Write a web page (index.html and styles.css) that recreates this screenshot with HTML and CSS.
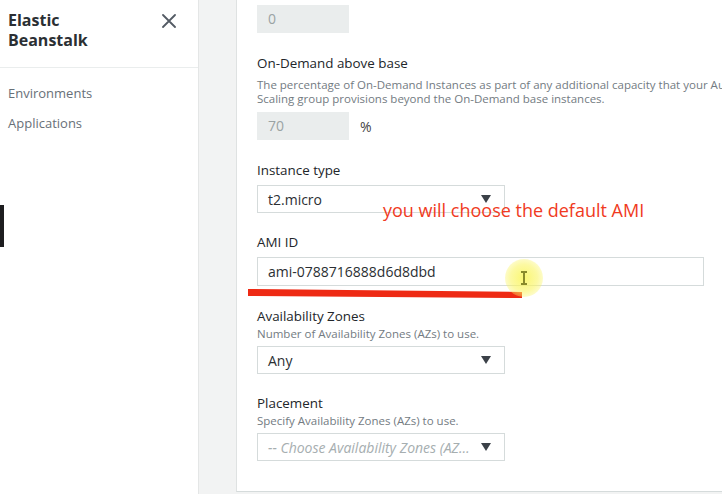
FILE: index.html
```html
<!DOCTYPE html>
<html lang="en">
<head>
<meta charset="utf-8">
<title>Elastic Beanstalk - Capacity</title>
<link rel="stylesheet" href="styles.css">
</head>
<body>
<div class="app">
  <aside class="sidebar">
    <div class="side-head">
      <div class="brand">Elastic<br>Beanstalk</div>
      <svg class="close" width="14" height="14" viewBox="0 0 14 14"><path d="M1 1L13 13M13 1L1 13" stroke="#545b64" stroke-width="1.8" stroke-linecap="round"/></svg>
    </div>
    <nav class="side-nav">
      <a class="nav-item">Environments</a>
      <a class="nav-item">Applications</a>
    </nav>
  </aside>
  <div class="gutter"></div>
  <main class="panel">
    <div class="field first">
      <div class="input small disabled">0</div>
    </div>
    <div class="field">
      <div class="label">On-Demand above base</div>
      <div class="desc spaced">The percentage of On-Demand Instances as part of any additional capacity that your Auto<br>Scaling group provisions beyond the On-Demand base instances.</div>
      <div class="row">
        <div class="input small disabled">70</div>
        <span class="unit">%</span>
      </div>
    </div>
    <div class="field">
      <div class="label">Instance type</div>
      <div class="select"><span class="value">t2.micro</span><span class="caret"></span></div>
    </div>
    <div class="field tight">
      <div class="label">AMI ID</div>
      <div class="input wide">ami-0788716888d6d8dbd</div>
    </div>
    <div class="field">
      <div class="label">Availability Zones</div>
      <div class="desc">Number of Availability Zones (AZs) to use.</div>
      <div class="select"><span class="value">Any</span><span class="caret"></span></div>
    </div>
    <div class="field tight">
      <div class="label">Placement</div>
      <div class="desc">Specify Availability Zones (AZs) to use.</div>
      <div class="select placeholder"><span class="value">-- Choose Availability Zones (AZ…</span><span class="caret"></span></div>
    </div>
  </main>
</div>
<div class="edge-bar"></div>
<div class="note">you will choose the default AMI</div>
<svg class="underline" width="722" height="494" viewBox="0 0 722 494"><polygon points="248,289 522,292 522,298 248,296" fill="#ee2a14"/></svg>
<div class="cursor-glow"><svg width="10" height="14" viewBox="0 0 10 14"><path d="M2 1H8M5 1V13M2 13H8" stroke="#8a8a2a" stroke-width="2"/></svg></div>
</body>
</html>
```
FILE: styles.css
```css
* { box-sizing: border-box; }
html, body { margin: 0; padding: 0; }
body {
  width: 722px;
  height: 494px;
  overflow: hidden;
  background: #f2f3f3;
  font-family: "Open Sans", "Noto Sans", sans-serif;
  color: #333;
  position: relative;
}
.app {
  display: flex;
  height: 494px;
}
.sidebar {
  width: 199px;
  flex: none;
  background: #fff;
  border-right: 1px solid #e4e6e6;
  height: 494px;
}
.side-head {
  height: 68px;
  border-bottom: 1px solid #eaeded;
  display: flex;
  justify-content: space-between;
  align-items: flex-start;
  padding: 10px 22px 0 8px;
}
.brand {
  font-weight: 700;
  font-size: 16px;
  line-height: 20px;
  color: #2b2f33;
}
.close { margin-top: 4px; }
.side-nav {
  display: flex;
  flex-direction: column;
  padding: 10px 0 0 8px;
}
.nav-item {
  font-size: 13px;
  line-height: 30px;
  color: #687078;
}
.gutter {
  width: 37px;
  flex: none;
}
.panel {
  flex: 1;
  background: #fff;
  border-left: 1px solid #dfe2e2;
  border-bottom: 1px solid #d5dbdb;
  height: 492px;
  padding: 5px 0 0 20px;
  display: flex;
  flex-direction: column;
  gap: 20px;
  overflow: hidden;
}
.field { display: flex; flex-direction: column; }
.field.tight { margin-top: -1px; }
.label {
  font-size: 13.4px;
  line-height: 20px;
  color: #22262a;
}
.desc {
  font-size: 11.5px;
  line-height: 14px;
  color: #737b82;
  margin-top: 1px;
  white-space: nowrap;
}
.desc.spaced { margin-top: 5px; line-height: 13.5px; }
.label + .select, .label + .input { margin-top: 5px; }
.desc + .select { margin-top: 5px; }
.desc + .row { margin-top: 7px; }
.row { display: flex; align-items: center; gap: 11px; }
.unit { font-size: 14px; color: #444; }
.input {
  height: 28px;
  border: 1px solid #d5dbdb;
  padding: 0 10px;
  font-size: 14px;
  line-height: 26px;
  color: #2b2f33;
  background: #fff;
}
.input.small { width: 92px; }
.input.disabled {
  background: #eaeded;
  border-color: #eaeded;
  color: #9aa3a4;
}
.input.wide { width: 447px; height: 29px; line-height: 27px; }
.select {
  width: 248px;
  height: 28px;
  border: 1px solid #d5dbdb;
  display: flex;
  align-items: center;
  justify-content: space-between;
  padding: 0 13px 0 10px;
  font-size: 14px;
  color: #2b2f33;
  white-space: nowrap;
  overflow: hidden;
}
.value { white-space: nowrap; }
.select.placeholder { color: #a6aeb0; font-style: italic; font-size: 14px; }
.caret {
  flex: none;
  width: 0;
  height: 0;
  border-left: 5.5px solid transparent;
  border-right: 5.5px solid transparent;
  border-top: 8px solid #3b4148;
}
.edge-bar {
  position: absolute;
  left: 0;
  top: 205px;
  width: 4px;
  height: 42px;
  background: #1d1d1f;
}
.note {
  position: absolute;
  left: 383px;
  top: 197px;
  font-family: "Open Sans", "Noto Sans", sans-serif;
  font-size: 18px;
  line-height: 26px;
  color: #f03a22;
  white-space: nowrap;
}
.underline {
  position: absolute;
  left: 0;
  top: 0;
  pointer-events: none;
}
.cursor-glow {
  position: absolute;
  left: 505px;
  top: 259px;
  width: 38px;
  height: 38px;
  border-radius: 50%;
  background: radial-gradient(circle, rgba(250,245,90,0.85) 0%, rgba(250,245,100,0.6) 50%, rgba(255,250,150,0) 100%);
  display: flex;
  align-items: center;
  justify-content: center;
}
```
